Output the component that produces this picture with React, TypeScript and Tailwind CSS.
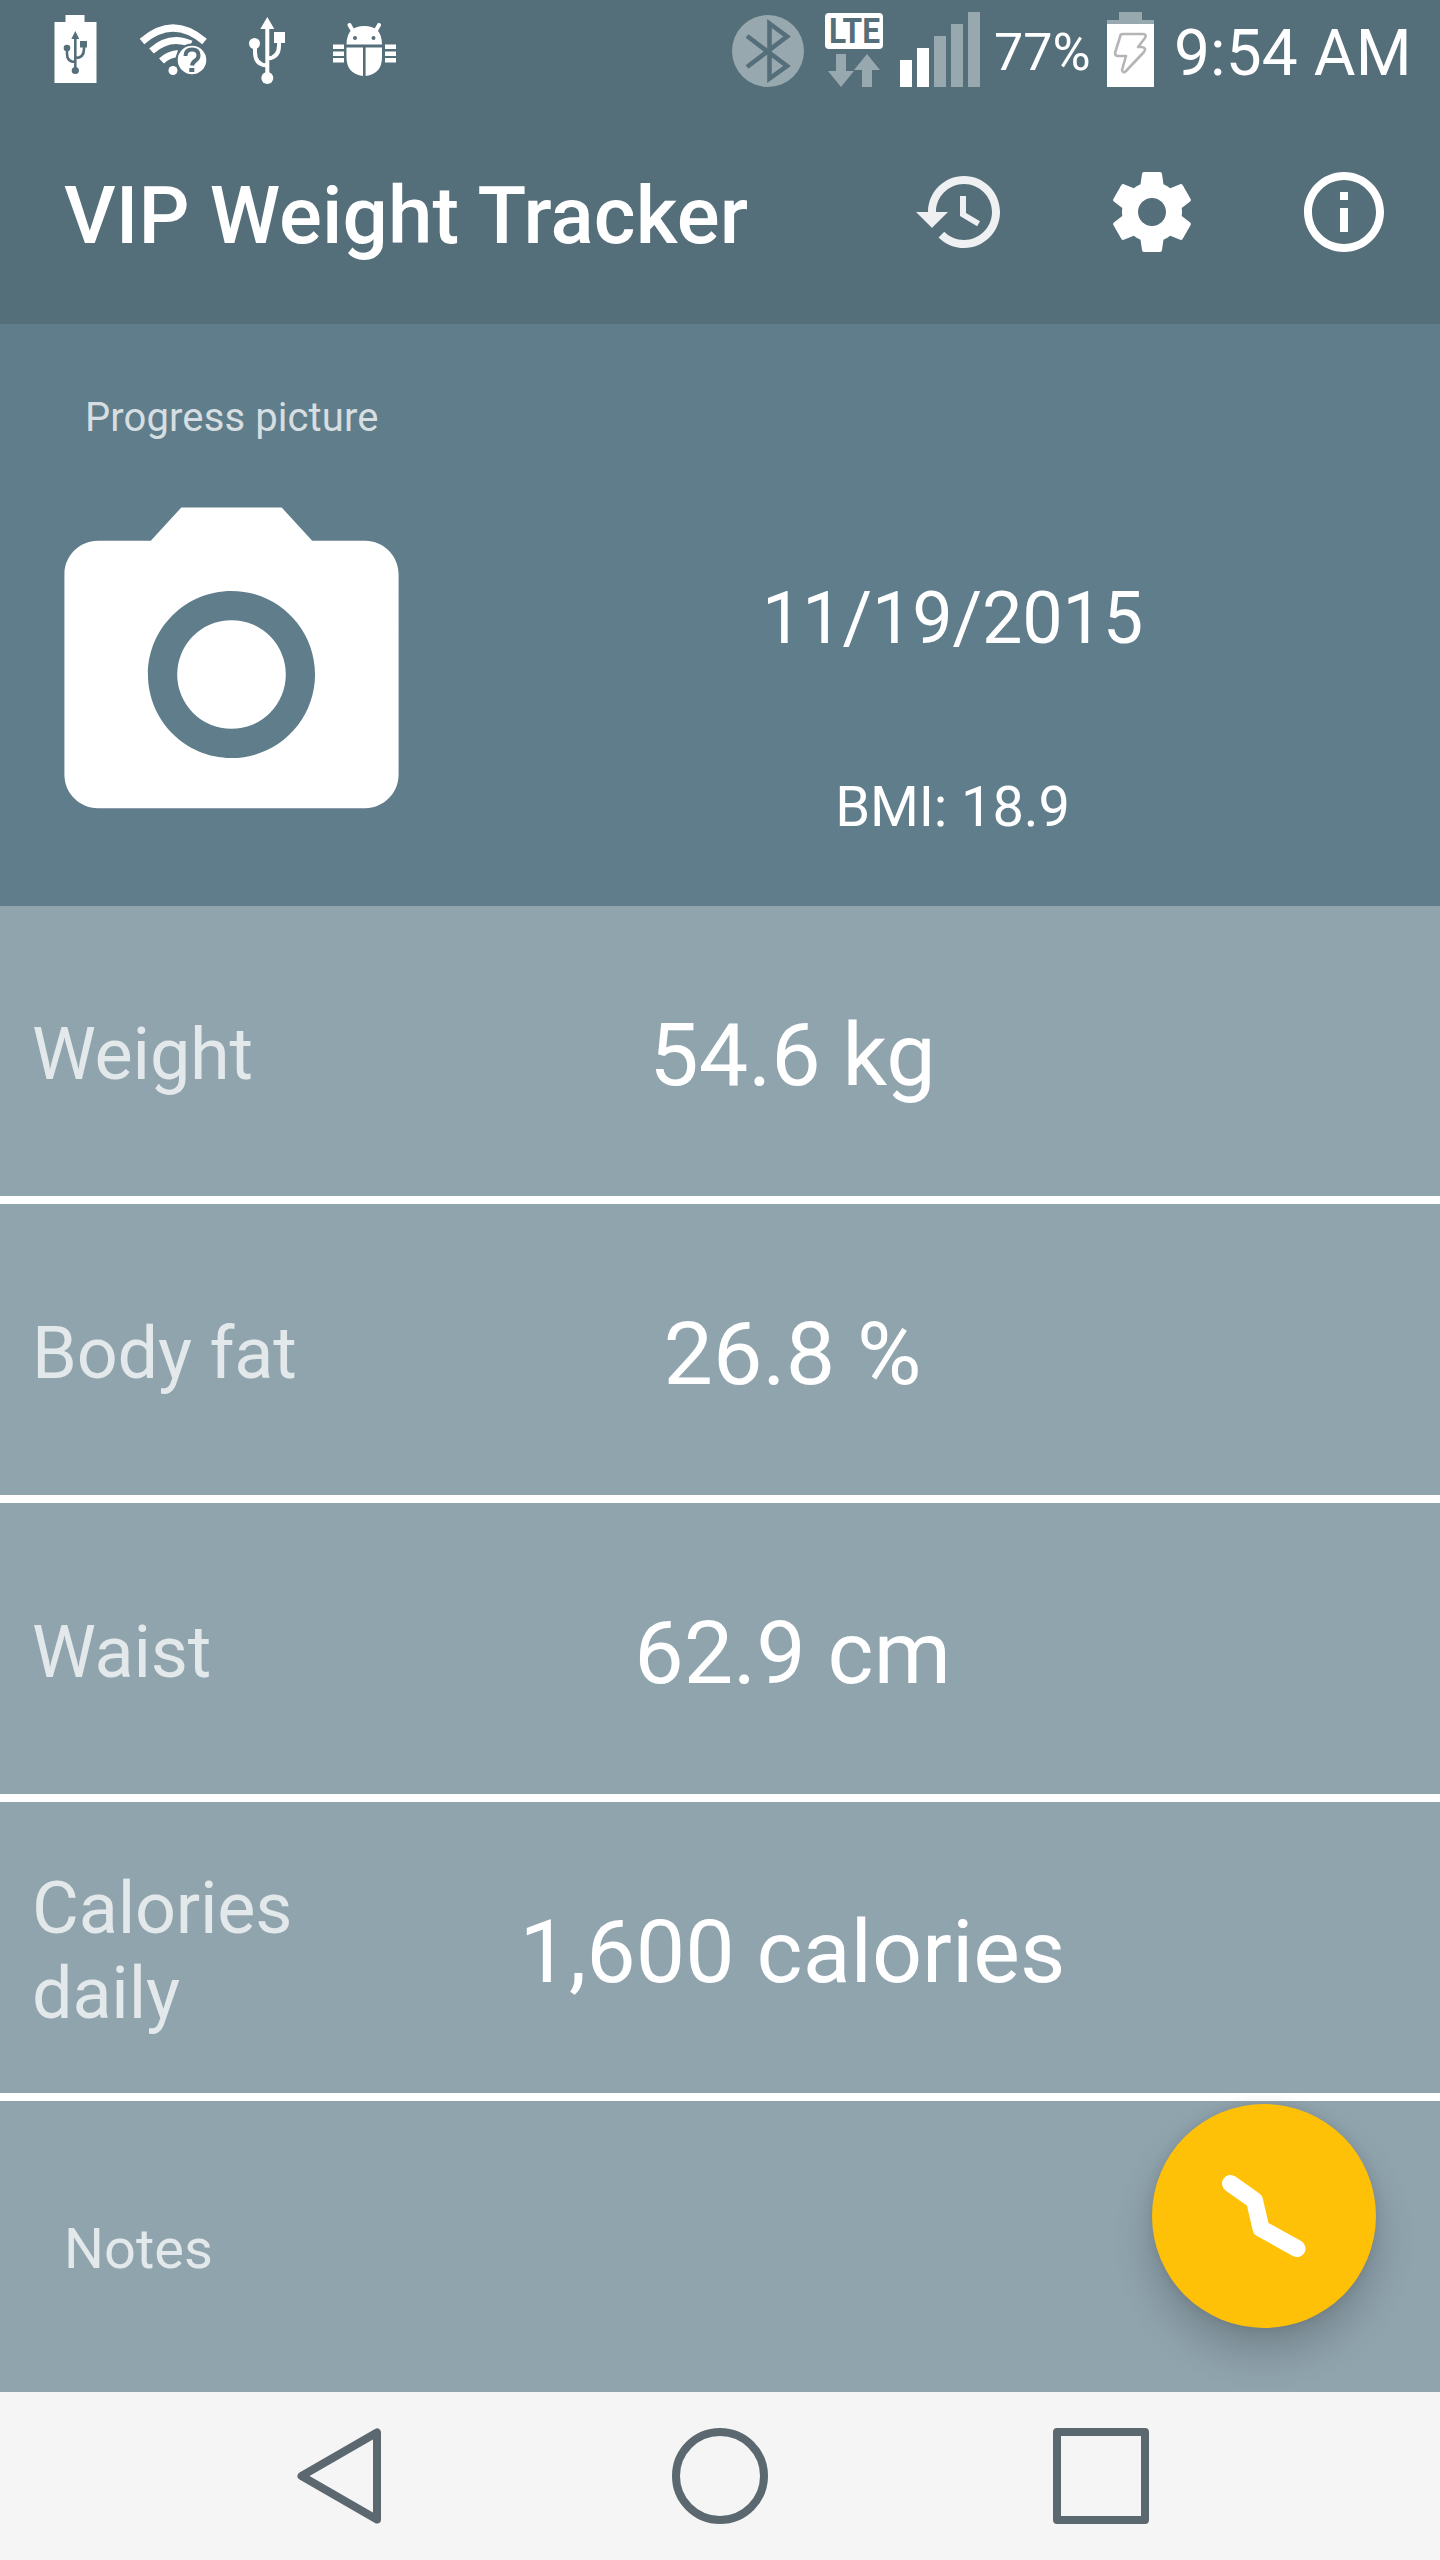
import type { ReactNode } from 'react'

const measurements = [
  { label: 'Weight', value: '54.6 kg' },
  { label: 'Body fat', value: '26.8 %' },
  { label: 'Waist', value: '62.9 cm' },
  { label: 'Calories daily', value: '1,600 calories' },
]

const signalBars = [
  { height: 'h-[27px]', color: 'bg-white' },
  { height: 'h-[39px]', color: 'bg-white' },
  { height: 'h-[51px]', color: 'bg-[#98a8af]' },
  { height: 'h-[63px]', color: 'bg-[#98a8af]' },
  { height: 'h-[75px]', color: 'bg-[#98a8af]' },
]

function MaterialIcon({ className, children }: { className: string; children: ReactNode }) {
  return (
    <svg viewBox="0 0 24 24" fill="currentColor" className={`shrink-0 ${className}`}>
      {children}
    </svg>
  )
}

function UsbBattery() {
  return (
    <svg viewBox="0 0 43 68" className="ml-[54px] mt-[15px] h-[68px] w-[43px] shrink-0">
      <path d="M11.5 0h19v7H42.5v61H.5V7h11z" fill="#fff" />
      <g fill="none" stroke="#546e7a" strokeWidth="2.6">
        <path d="M21.3 22v33M13 33v6q0 8 8.3 8M30 31v3q0 9-8.7 9" />
      </g>
      <g fill="#546e7a">
        <path d="M21.3 16l4 8h-8zM26 26h7v6.500h-7z" />
        <circle cx="13" cy="33" r="3.300" />
        <circle cx="21.3" cy="55.500" r="3.600" />
      </g>
    </svg>
  )
}

function WifiUnknown() {
  return (
    <svg viewBox="0 0 68 52" className="ml-[42px] mt-[24px] h-[52px] w-[68px] shrink-0">
      <g fill="none" stroke="#fff" strokeWidth="7">
        <path d="M3 17.500Q34-9.500 65.500 17.500" />
        <path d="M12.500 27Q31 10.500 52 20" />
        <path d="M22.500 37Q29 30.500 39 29.500" />
      </g>
      <circle cx="34" cy="46.500" r="4.500" fill="#fff" />
      <circle cx="53" cy="36" r="16.500" fill="#546e7a" />
      <circle cx="53" cy="36" r="14.300" fill="#fff" />
      <path d="M46.500 32q0-6.500 6.500-6.500t6.500 6q0 3-3 5t-3.500 5" fill="none" stroke="#546e7a" strokeWidth="4" />
      <path d="M50.300 44h5v4h-5z" fill="#546e7a" />
    </svg>
  )
}

function Usb() {
  return (
    <svg viewBox="0 0 37 67" className="ml-[42px] mt-[17px] h-[67px] w-[37px] shrink-0">
      <g fill="none" stroke="#fff" strokeWidth="4">
        <path d="M18.300 10v50M6 27v8q0 13 12 13.500M30 25v3.500q0 12-11 13" />
      </g>
      <g fill="#fff">
        <path d="M18.300 0l7 12h-14zM25 15h11v11H25z" />
        <circle cx="5.500" cy="26.500" r="5.500" />
        <circle cx="18.300" cy="61" r="6" />
      </g>
    </svg>
  )
}

function Bug() {
  return (
    <svg viewBox="0 0 63 54" className="ml-[47px] mt-[23px] h-[54px] w-[63px] shrink-0">
      <g fill="#fff">
        <path d="M13.500 21.500Q13.500 3 31.300 3T49 21.500z" />
        <path d="M13.500 24.500H30V53Q13.500 51 13.500 34zM32.600 24.500H49V34Q49 51 32.600 53z" />
        <path d="M0 21.500h11v4.500H0zM0 28.500h11V33H0zM0 35h11v4.500H0zM52 21.500h11v4.500H52zM52 28.500h11V33H52zM52 35h11v4.500H52z" />
      </g>
      <path d="M16.500 2l4 7M46 2l-4 7" stroke="#fff" strokeWidth="4" strokeLinecap="round" />
      <circle cx="22" cy="15" r="2" fill="#546e7a" />
      <circle cx="40.500" cy="15" r="2" fill="#546e7a" />
    </svg>
  )
}

function Bluetooth() {
  return (
    <svg viewBox="0 0 72 72" className="ml-[336px] mt-[15px] size-[72px] shrink-0">
      <circle cx="36" cy="36" r="36" fill="#98a8af" />
      <path d="M15 21l40 30-17.500 12.500V8.500L55 21.500 15 52" fill="none" stroke="#546e7a" strokeWidth="4.600" />
    </svg>
  )
}

function Lte() {
  return (
    <svg viewBox="0 0 58 74" className="ml-[21px] mt-[13px] h-[74px] w-[58px] shrink-0 overflow-visible">
      <rect width="58" height="36" rx="4" fill="#fff" />
      <text
        x="4"
        y="30"
        fontSize="35"
        fontWeight="700"
        textLength="51"
        lengthAdjust="spacingAndGlyphs"
        fill="#546e7a"
        className="font-[Roboto,sans-serif]"
      >
        LTE
      </text>
      <path d="M11 41h10v17h8L16 74 3 58h8zM42 41l13 16h-8v17H37V57h-8z" fill="#98a8af" />
    </svg>
  )
}

function ChargingBattery() {
  return (
    <svg viewBox="0 0 47 75" className="ml-[18px] mt-[12px] h-[75px] w-[47px] shrink-0">
      <path d="M12 0h23v8h12v5H0V8h12z" fill="#98a8af" />
      <path d="M0 12h47v63H0z" fill="#fff" />
      <path
        d="M16 22h20q4 0 2 4l-7 9h4q5 1 2 5L19 59q-3 3-4-1l4-14h-8q-3 0-3-3l5-16q0-3 3-3z"
        fill="none"
        stroke="#b5b5b5"
        strokeWidth="2.600"
        strokeLinejoin="round"
      />
    </svg>
  )
}

function StatusBar() {
  return (
    <div className="flex h-[100px] items-start text-white">
      <UsbBattery />
      <WifiUnknown />
      <Usb />
      <Bug />
      <Bluetooth />
      <Lte />
      <div className="ml-[17px] flex h-[87px] items-end gap-[5px]">
        {signalBars.map((bar) => (
          <div key={bar.height} className={`w-[12px] ${bar.height} ${bar.color}`} />
        ))}
      </div>
      <span className="ml-[14px] mt-[22px] w-[95px] whitespace-nowrap text-[52px] leading-[61px]">77%</span>
      <ChargingBattery />
      <span className="ml-[20px] mt-[16px] whitespace-nowrap text-[64px] leading-[75px] tracking-[0.1px]">9:54 AM</span>
    </div>
  )
}

function AppBar() {
  return (
    <header className="flex h-[224px] items-center pl-[64px] text-white">
      <h1 className="mt-[7px] w-[848px] whitespace-nowrap text-[80px] font-medium leading-[94px] tracking-[0.12px]">
        VIP Weight Tracker
      </h1>
      <div className="flex gap-[96px]">
        <MaterialIcon className="size-[96px] opacity-90">
          <path d="M13 3c-4.970 0-9 4.030-9 9H1l3.890 3.890.070.140L9 12H6c0-3.870 3.130-7 7-7s7 3.130 7 7-3.130 7-7 7c-1.930 0-3.680-.790-4.940-2.060l-1.420 1.420C8.270 19.990 10.510 21 13 21c4.970 0 9-4.030 9-9s-4.030-9-9-9zm-1 5v5l4.280 2.540.720-1.210-3.500-2.080V8H12z" />
        </MaterialIcon>
        <MaterialIcon className="size-[96px]">
          <path d="M19.430 12.980c.040-.320.070-.640.070-.980s-.030-.660-.070-.980l2.110-1.650c.190-.150.240-.420.120-.640l-2-3.460c-.120-.220-.390-.300-.610-.220l-2.490 1c-.520-.400-1.080-.730-1.690-.980l-.380-2.650C14.460 2.180 14.250 2 14 2h-4c-.250 0-.460.180-.490.420l-.380 2.650c-.610.250-1.170.590-1.690.980l-2.490-1c-.230-.090-.490 0-.610.220l-2 3.460c-.130.220-.070.490.120.640l2.110 1.650c-.040.320-.070.650-.070.980s.030.660.070.980l-2.110 1.650c-.190.150-.240.420-.120.640l2 3.460c.120.220.390.300.610.220l2.490-1c.520.400 1.080.730 1.690.980l.380 2.650c.030.240.240.420.490.420h4c.250 0 .460-.180.490-.420l.380-2.650c.610-.250 1.170-.590 1.690-.980l2.490 1c.230.090.490 0 .610-.220l2-3.460c.120-.220.070-.490-.120-.640l-2.110-1.650zM12 15.500c-1.930 0-3.500-1.570-3.500-3.500s1.570-3.500 3.500-3.500 3.500 1.570 3.500 3.500-1.570 3.500-3.500 3.500z" />
        </MaterialIcon>
        <MaterialIcon className="size-[96px]">
          <path d="M11 17h2v-6h-2v6zm1-15C6.480 2 2 6.480 2 12s4.480 10 10 10 10-4.480 10-10S17.520 2 12 2zm0 18c-4.410 0-8-3.590-8-8s3.590-8 8-8 8 3.590 8 8-3.590 8-8 8zM11 9h2V7h-2v2z" />
        </MaterialIcon>
      </div>
    </header>
  )
}

function Summary() {
  return (
    <section className="flex h-[582px] bg-[#607d8b] text-white">
      <div className="w-[465px] pt-[70px]">
        <p className="pl-[85px] text-[40px] leading-[47px] tracking-[0.1px] text-white/75">Progress picture</p>
        <MaterialIcon className="ml-[31px] mt-[33px] size-[401px]">
          <circle cx="12" cy="12" r="3.250" />
          <path d="M9 2L7.170 4H4c-1.100 0-2 .900-2 2v12c0 1.100.900 2 2 2h16c1.100 0 2-.900 2-2V6c0-1.100-.900-2-2-2h-3.170L15 2H9zm3 15c-2.760 0-5-2.240-5-5s2.240-5 5-5 5 2.240 5 5-2.240 5-5 5z" />
        </MaterialIcon>
      </div>
      <div className="flex w-[975px] flex-col items-center pt-[253px]">
        <p className="text-[72px] leading-[84px] tracking-[-0.2px]">11/19/2015</p>
        <p className="mt-[113px] text-[56px] leading-[66px] tracking-[-0.1px]">BMI: 18.9</p>
      </div>
    </section>
  )
}

function BottomNav() {
  return (
    <nav className="flex h-[168px] items-start bg-[#f5f5f5] pt-[36px]">
      <svg viewBox="0 0 84 96" className="ml-[297px] h-[96px] w-[84px]" fill="none">
        <path d="M80 4.500v87L4.500 48z" stroke="#5b6870" strokeWidth="8" strokeLinejoin="round" />
      </svg>
      <div className="ml-[291px] size-[96px] rounded-full border-8 border-[#5b6870]" />
      <div className="ml-[285px] size-[96px] rounded-[4px] border-8 border-[#5b6870]" />
    </nav>
  )
}

export default function App() {
  return (
    <div className="relative flex h-[2560px] w-[1440px] flex-col overflow-hidden bg-[#546e7a] font-[Roboto,sans-serif]">
      <StatusBar />
      <AppBar />
      <Summary />

      <main className="flex h-[1486px] flex-col bg-[#90a4ae]">
        {measurements.map((item) => (
          <div
            key={item.label}
            className="flex h-[299px] shrink-0 items-center border-b-8 border-white pt-[7px] first:h-[298px]"
          >
            <div className="w-[344px] pl-[32px] text-[72px] leading-[85px] tracking-[-0.2px] text-white/75">
              {item.label}
            </div>
            <div className="w-[897px] text-center text-[88px] leading-[103px] text-white">{item.value}</div>
          </div>
        ))}
        <div className="flex flex-1 items-center pl-[64px] pt-[4px] text-[56px] leading-[66px] text-white/75">Notes</div>
      </main>

      <BottomNav />

      {/* Floating chart button */}
      <button
        aria-label="Show chart"
        className="absolute left-[1152px] top-[2104px] size-[224px] rounded-full bg-[#ffc107] shadow-[0_24px_40px_rgba(0,0,0,0.2),0_0_12px_rgba(0,0,0,0.1)]"
      >
        <svg viewBox="0 0 224 224" className="size-full" fill="none">
          <path
            d="M78.500 79.500L102.500 96.500l6.500 28 36 20"
            stroke="#fff"
            strokeWidth="17"
            strokeLinecap="round"
            strokeLinejoin="round"
          />
        </svg>
      </button>
    </div>
  )
}
